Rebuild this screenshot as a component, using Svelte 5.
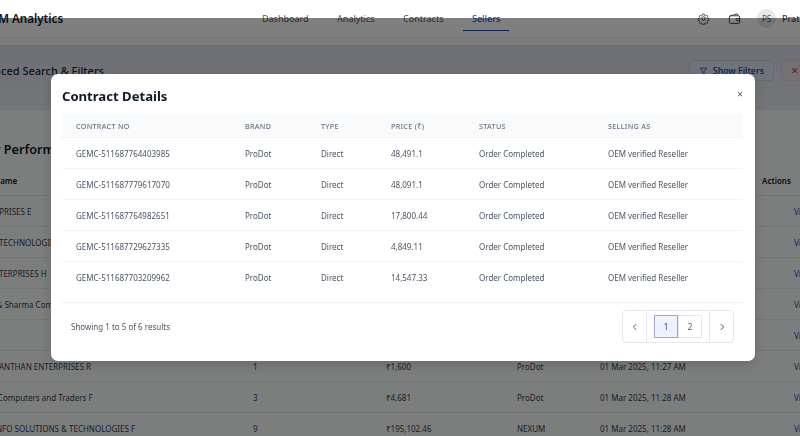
<script>
	const nav = ['Dashboard', 'Analytics', 'Contracts', 'Sellers'];

	const sellers = [
		{ name: 'I ENTERPRISES E', count: '', price: '', brand: '', date: '' },
		{ name: 'SHIVAS TECHNOLOGIES', count: '', price: '', brand: '', date: '' },
		{ name: 'SUN ENTERPRISES H', count: '', price: '', brand: '', date: '' },
		{ name: 'Verma & Sharma Company', count: '', price: '', brand: '', date: '' },
		{ name: '', count: '', price: '', brand: '', date: '' },
		{ name: 'SIRADHANTHAN ENTERPRISES R', count: '1', price: '₹1,600', brand: 'ProDot', date: '01 Mar 2025, 11:27 AM' },
		{ name: 'Shama Computers and Traders F', count: '3', price: '₹4,681', brand: 'ProDot', date: '01 Mar 2025, 11:28 AM' },
		{ name: 'ABHIJ INFO SOLUTIONS & TECHNOLOGIES F', count: '9', price: '₹195,102.46', brand: 'NEXUM', date: '01 Mar 2025, 11:28 AM' }
	];

	const contracts = [
		{ no: 'GEMC-511687764403985', price: '48,491.1' },
		{ no: 'GEMC-511687779617070', price: '48,091.1' },
		{ no: 'GEMC-511687764982651', price: '17,800.44' },
		{ no: 'GEMC-511687729627335', price: '4,849.11' },
		{ no: 'GEMC-511687703209962', price: '14,547.33' }
	];
</script>

<div class="page">
	<header class="topbar">
		<div class="logo">GeM Analytics</div>
		<nav class="nav">
			{#each nav as item}
				<span class="nav-item" class:active={item === 'Sellers'}>{item}</span>
			{/each}
		</nav>
		<div class="tools">
			<svg class="tool gear" viewBox="0 0 24 24" fill="none" stroke="currentColor" stroke-width="1.8" stroke-linejoin="round">
				<path d="M10.3 3h3.4l.6 2.7 1.9.8 2.3-1.5 2.4 2.4-1.5 2.3.8 1.9 2.7.6v3.4l-2.7.6-.8 1.9 1.5 2.3-2.4 2.4-2.3-1.5-1.9.8-.6 2.7h-3.4l-.6-2.7-1.9-.8-2.3 1.5-2.4-2.4 1.5-2.3-.8-1.9-2.7-.6v-3.4l2.7-.6.8-1.9-1.5-2.3 2.4-2.4 2.3 1.5 1.9-.8z" transform="translate(1.2 1.2) scale(.9)" />
				<circle cx="12" cy="12" r="3.2" />
			</svg>
			<svg class="tool wallet" viewBox="0 0 24 24" fill="none" stroke="currentColor" stroke-width="1.8" stroke-linejoin="round" stroke-linecap="round">
				<path d="M5 7 17 3.500 18.500 7" />
				<rect x="2.500" y="7" width="19" height="14" rx="2" />
				<path d="M21.500 12H17a2 2 0 0 0 0 4h4.500" />
			</svg>
			<span class="avatar">PS</span>
			<span class="user">Pratap Singh</span>
		</div>
	</header>

	<div class="strip"></div>

	<section class="filters">
		<h2>Advanced Search &amp; Filters</h2>
		<div class="filter-actions">
			<span class="btn show">
				<svg viewBox="0 0 24 24" fill="none" stroke="currentColor" stroke-width="2" stroke-linejoin="round"><path d="M3 4h18l-7 9v7l-4-2v-5z" /></svg>
				Show Filters
			</span>
			<span class="btn clear">✕ Clear</span>
		</div>
	</section>

	<h2 class="perf">Seller Performance</h2>

	<div class="seller-table">
		<div class="seller-row head">
			<span class="c-name">Seller Name</span>
			<span class="c-count"></span>
			<span class="c-price"></span>
			<span class="c-brand"></span>
			<span class="c-date"></span>
			<span class="c-act">Actions</span>
		</div>
		{#each sellers as s}
			<div class="seller-row">
				<span class="c-name">{s.name}</span>
				<span class="c-count">{s.count}</span>
				<span class="c-price">{s.price}</span>
				<span class="c-brand">{s.brand}</span>
				<span class="c-date">{s.date}</span>
				<span class="c-act link">View</span>
			</div>
		{/each}
	</div>
</div>

<div class="overlay">
	<div class="modal">
		<div class="modal-head">
			<h3>Contract Details</h3>
			<span class="close">×</span>
		</div>
		<div class="table">
			<div class="row thead">
				<span>CONTRACT NO</span>
				<span>BRAND</span>
				<span>TYPE</span>
				<span>PRICE (₹)</span>
				<span>STATUS</span>
				<span>SELLING AS</span>
			</div>
			{#each contracts as c}
				<div class="row">
					<span>{c.no}</span>
					<span>ProDot</span>
					<span>Direct</span>
					<span>{c.price}</span>
					<span>Order Completed</span>
					<span>OEM verified Reseller</span>
				</div>
			{/each}
		</div>
		<div class="modal-foot">
			<span class="showing">Showing 1 to 5 of 6 results</span>
			<div class="pager">
				<span class="arrow prev">
					<svg viewBox="0 0 12 12" fill="none" stroke="currentColor" stroke-width="1.2"><path d="M7.500 2.500 4 6l3.500 3.500" /></svg>
				</span>
				<div class="pages">
					<span class="pg on">1</span>
					<span class="pg">2</span>
				</div>
				<span class="arrow next">
					<svg viewBox="0 0 12 12" fill="none" stroke="currentColor" stroke-width="1.2"><path d="M4.500 2.500 8 6l-3.500 3.500" /></svg>
				</span>
			</div>
		</div>
	</div>
</div>

<style>
	:global(body) {
		margin: 0;
		overflow: hidden;
		background: #f9fafb;
		font-family: 'Noto Sans', 'Open Sans', sans-serif;
		color: #1f2937;
	}
	.page {
		width: 884px;
		height: 436px;
		margin-left: -17px;
		overflow: hidden;
	}
	.topbar {
		height: 37px;
		background: #fff;
		border-bottom: 1px solid #e5e7eb;
		display: flex;
		align-items: stretch;
		box-sizing: content-box;
	}
	.logo {
		flex: 0 0 279px;
		font-size: 11.600px;
		font-weight: 600;
		line-height: 37px;
		color: #111827;
		white-space: nowrap;
	}
	.nav {
		display: flex;
		gap: 28.500px;
		flex: 0 0 420px;
	}
	.nav-item {
		font-size: 9px;
		color: #4b5563;
		line-height: 37px;
		height: 30px;
		position: relative;
	}
	.nav-item.active {
		color: #1d4ed8;
		font-weight: 500;
	}
	.nav-item.active::after {
		content: '';
		position: absolute;
		left: -9px;
		right: -9px;
		bottom: -1px;
		height: 1.500px;
		background: #1e40af;
	}
	.tools {
		display: flex;
		align-items: center;
		color: #374151;
	}
	.tool {
		width: 13px;
		height: 13px;
		flex: none;
	}
	.gear {
		margin-left: 15px;
	}
	.wallet {
		margin-left: 18px;
	}
	.avatar {
		width: 19px;
		height: 19px;
		border-radius: 50%;
		background: #e5e7eb;
		color: #4b5563;
		font-size: 8px;
		display: flex;
		align-items: center;
		justify-content: center;
		margin-left: 16px;
	}
	.user {
		font-size: 9px;
		font-weight: 500;
		margin-left: 6px;
		white-space: nowrap;
	}
	.strip {
		height: 7px;
	}
	.filters {
		height: 65px;
		background: linear-gradient(#dbe0ef, #e8eaef);
		border-bottom: 1px solid #e5e7eb;
		display: flex;
		align-items: flex-start;
		justify-content: space-between;
		box-sizing: border-box;
		padding: 15px 0 0 0;
	}
	.filters h2 {
		margin: 0 0 0 -15px;
		font-size: 11px;
		font-weight: 500;
		line-height: 22px;
		white-space: nowrap;
	}
	.filter-actions {
		display: flex;
		gap: 7px;
	}
	.btn {
		display: flex;
		align-items: center;
		gap: 5px;
		height: 21px;
		border-radius: 4px;
		font-size: 8.900px;
		box-sizing: border-box;
		padding: 0 9px;
		white-space: nowrap;
		font-weight: 500;
	}
	.btn svg {
		width: 10px;
		height: 10px;
	}
	.show {
		width: 85px;
		border: 1px solid #c3d3ee;
		color: #1e3a9e;
		background: #dfe6f5;
	}
	.clear {
		width: 86px;
		border: 1px solid #ecd0d4;
		color: #dc2626;
		background: #e8e2ea;
	}
	.perf {
		margin: 28px 0 0 -17px;
		height: 22px;
		font-size: 12.700px;
		font-weight: 600;
		line-height: 22px;
		color: #111827;
		white-space: nowrap;
	}
	.seller-table {
		margin-top: 5px;
		margin-left: -13px;
		font-size: 8px;
	}
	.seller-row {
		display: grid;
		grid-template-columns: 283px 133px 131px 83px 162px 60px;
		height: 31px;
		align-items: center;
		border-bottom: 1px solid #e5e7eb;
		box-sizing: border-box;
		white-space: nowrap;
		color: #374151;
	}
	.head {
		font-weight: 600;
		color: #111827;
	}
	.c-count {
		color: #1e40af;
	}
	.link {
		color: #1d4ed8;
		padding-left: 32px;
	}
	.overlay {
		position: fixed;
		left: 0;
		top: 18px;
		right: 0;
		bottom: 0;
		background: rgba(0, 0, 0, 0.5);
		padding: 56px 0 0 51px;
	}
	.modal {
		width: 704px;
		height: 287px;
		background: #fff;
		border-radius: 7px;
		padding: 0 12px 0 11px;
		box-sizing: border-box;
		box-shadow: 0 4px 12px rgba(0, 0, 0, 0.15);
	}
	.modal-head {
		height: 40px;
		display: flex;
		justify-content: space-between;
		align-items: center;
		padding-top: 4px;
		box-sizing: border-box;
	}
	.modal-head h3 {
		margin: 0;
		font-size: 13.100px;
		font-weight: 700;
		color: #111827;
	}
	.close {
		font-size: 10px;
		color: #4b5563;
		margin-top: -4px;
	}
	.table {
		height: 189px;
		border-bottom: 1px solid #f0f1f3;
		box-sizing: border-box;
	}
	.row {
		display: grid;
		grid-template-columns: 169px 76px 70px 88px 129px 149px;
		height: 31px;
		align-items: center;
		font-size: 8px;
		color: #4b5563;
		border-bottom: 1.500px solid #f3f4f6;
		box-sizing: border-box;
	}
	.row:last-child {
		border-bottom: none;
	}
	.row span {
		padding-left: 14px;
		white-space: nowrap;
	}
	.thead {
		height: 24px;
		background: #f9fafb;
		font-size: 7.200px;
		color: #6b7280;
		letter-spacing: 0.3px;
		font-weight: 500;
	}
	.modal-foot {
		display: flex;
		justify-content: space-between;
		align-items: flex-start;
		padding: 7px 9px 0 9px;
	}
	.showing {
		font-size: 8px;
		color: #4b5563;
		line-height: 33px;
	}
	.pager {
		display: flex;
		width: 112px;
		height: 33px;
		border: 1px solid #e5e7eb;
		border-radius: 4px;
		box-sizing: border-box;
		color: #4b5563;
	}
	.arrow {
		width: 23px;
		flex: none;
		display: flex;
		align-items: center;
		justify-content: center;
	}
	.arrow svg {
		width: 10px;
		height: 10px;
	}
	.prev {
		border-right: 1px solid #e5e7eb;
	}
	.next {
		border-left: 1px solid #e5e7eb;
	}
	.pages {
		flex: 1;
		display: flex;
		align-items: center;
		justify-content: center;
	}
	.pg {
		width: 24px;
		height: 23px;
		display: flex;
		align-items: center;
		justify-content: center;
		font-size: 8px;
		border: 1px solid #e5e7eb;
		box-sizing: border-box;
	}
	.pg.on {
		background: #eef2ff;
		border-color: #a0a3d4;
		color: #3730a3;
	}
</style>
